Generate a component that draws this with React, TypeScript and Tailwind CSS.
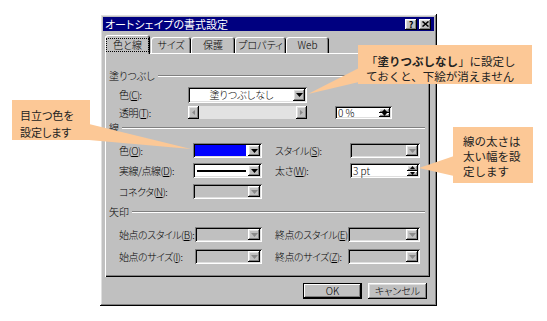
import type { ReactNode } from 'react';

const raised =
    'shadow-[inset_-1px_-1px_#000,inset_1px_1px_#fff,inset_-2px_-2px_#808080,inset_2px_2px_#dfdfdf]';
const sunken =
    'shadow-[inset_1px_1px_#808080,inset_-1px_-1px_#fff,inset_2px_2px_#000,inset_-2px_-2px_#dfdfdf]';

const Tri = ({ dir = 'down', dim = false, small = false }: { dir?: 'down' | 'up' | 'left' | 'right', dim?: boolean, small?: boolean }) => {
    const s = small ? 5 : 7;
    const h = small ? 3 : 4;
    const d = {
        down: `M0 0H${s}L${s / 2} ${h}Z`,
        up: `M${s / 2} 0L${s} ${h}H0Z`,
        left: `M${h} 0V${s}L0 ${s / 2}Z`,
        right: `M0 0V${s}L${h} ${s / 2}Z`,
    }[dir];
    const horiz = dir === 'left' || dir === 'right';
    return (
        <svg width={horiz ? h : s} height={horiz ? s : h} viewBox={`0 0 ${horiz ? h : s} ${horiz ? s : h}`}>
            <path d={d} fill={dim ? '#8a8a8a' : '#000'} />
        </svg>
    );
};

const Combo = ({ className, disabled = false, children }: { className: string, disabled?: boolean, children?: ReactNode }) => (
    <div className={`flex h-full p-[2px] ${sunken} ${disabled ? 'bg-[#c0c0c0]' : 'bg-white'} ${className}`}>
        <div className="flex-1 min-w-0 flex items-center">{children}</div>
        <div className={`w-[12px] h-full bg-[#c0c0c0] flex items-center justify-center ${raised}`}>
            <Tri dim={disabled} />
        </div>
    </div>
);

const Spin = ({ className, value }: { className: string, value: string }) => (
    <div className={`flex h-full p-[2px] bg-white ${sunken} ${className}`}>
        <div className="flex-1 flex items-center pl-[1px] leading-none">{value}</div>
        <div className="w-[11px] h-full flex flex-col">
            <div className={`flex-1 bg-[#c0c0c0] flex items-center justify-center ${raised}`}>
                <Tri dir="up" small />
            </div>
            <div className={`flex-1 bg-[#c0c0c0] flex items-center justify-center ${raised}`}>
                <Tri small />
            </div>
        </div>
    </div>
);

const Header = ({ label, className }: { label: string, className: string }) => (
    <div className={`flex items-center h-[14px] pl-[4px] pr-[5px] ${className}`}>
        <span className="leading-none">{label}</span>
        <div className="flex-1 ml-[3px] h-[2px] border-t border-[#808080] border-b border-b-white" />
    </div>
);

const Label = ({ text, k, className }: { text: string, k: string, className: string }) => (
    <span className={`shrink-0 leading-none whitespace-nowrap tracking-[-0.5px] ${className}`}>
        {text}(<u>{k}</u>):
    </span>
);

const Tab = ({ label, className, active = false }: { label: string, className: string, active?: boolean }) => (
    <div
        className={`flex items-center justify-center bg-[#c0c0c0] rounded-t-[3px] shadow-[inset_1px_1px_#fff,inset_-1px_0_#000,inset_-2px_0_#808080] ${active ? 'h-[19px] -mb-px relative z-10' : 'h-[16px]'} ${className}`}
    >
        {active ? (
            <span className="border border-dotted border-black px-[6px] py-[1px] leading-none">{label}</span>
        ) : (
            <span className="leading-none">{label}</span>
        )}
    </div>
);

const Button = ({ label, isDefault = false }: { label: string, isDefault?: boolean }) => (
    <div
        className={`w-[59px] h-[16px] flex items-center justify-center bg-[#c0c0c0] leading-none ${isDefault
            ? 'shadow-[inset_-1px_-1px_#000,inset_1px_1px_#000,inset_-2px_-2px_#000,inset_2px_2px_#fff,inset_-3px_-3px_#808080]'
            : raised}`}
    >
        {label}
    </div>
);

export default function App() {
    return (
        <div className="relative w-[547px] h-[321px] bg-white overflow-hidden pl-[100px] pt-[14px] font-['Noto_Sans_CJK_JP',sans-serif] text-black [font-feature-settings:'palt']">
            {/* dialog */}
            <div className={`w-[337px] h-[292px] bg-[#c0c0c0] p-[3px] text-[10px] font-light text-black ${raised}`}>
                <div className="h-[14px] bg-[#000080] flex items-center pl-[2px] pr-[3px]">
                    <span className="flex-1 text-white text-[11px] font-normal leading-none">オートシェイプの書式設定</span>
                    <div className={`w-[12px] h-[11px] bg-[#c0c0c0] flex items-center justify-center text-[9px] font-bold leading-none ${raised}`}>?</div>
                    <div className={`ml-[2px] w-[12px] h-[11px] bg-[#c0c0c0] flex items-center justify-center ${raised}`}>
                        <svg width="7" height="6" viewBox="0 0 7 6">
                            <path d="M0.5 0.5L6.5 5.5M6.5 0.5L0.5 5.5" stroke="#000" strokeWidth="1.5" />
                        </svg>
                    </div>
                </div>

                <div className="flex items-end h-[18px] mt-[4px] pl-[2px]">
                    <Tab label="色と線" className="w-[45px]" active />
                    <Tab label="サイズ" className="w-[40px] ml-px" />
                    <Tab label="保護" className="w-[44px]" />
                    <Tab label="プロパティ" className="w-[51px]" />
                    <Tab label="Web" className="w-[43px]" />
                </div>

                <div className="ml-[2px] w-[325px] h-[224px] flex flex-col shadow-[inset_1px_1px_#fff,inset_-1px_-1px_#000,inset_-2px_-2px_#808080]">
                    <Header label="塗りつぶし" className="mt-[16px]" />
                    <div className="flex items-center h-[16px] mt-[4px] pl-[14px]">
                        <Label text="色" k="C" className="w-[69px]" />
                        <Combo className="w-[119px]">
                            <span className="flex-1 text-center leading-none">塗りつぶしなし</span>
                        </Combo>
                    </div>
                    <div className="flex items-center h-[13px] mt-[3px] pl-[14px]">
                        <Label text="透明" k="T" className="w-[69px]" />
                        <div className="flex w-[119px] h-full bg-[#e2e2e2]">
                            <div className={`w-[11px] h-full bg-[#c0c0c0] flex items-center justify-center ${raised}`}>
                                <Tri dir="left" dim small />
                            </div>
                            <div className="flex-1" />
                            <div className={`w-[11px] h-full bg-[#c0c0c0] flex items-center justify-center ${raised}`}>
                                <Tri dir="right" dim small />
                            </div>
                        </div>
                        <Spin className="w-[57px] ml-[28px]" value="0 %" />
                    </div>

                    <Header label="線" className="mt-[2px]" />
                    <div className="flex items-center h-[15px] mt-[8px] pl-[14px]">
                        <Label text="色" k="O" className="w-[74px]" />
                        <Combo className="w-[69px]">
                            <div className="w-full h-full bg-[#0000ff] mr-[2px]" />
                        </Combo>
                        <Label text="スタイル" k="S" className="w-[75px] ml-[13px]" />
                        <Combo className="w-[70px]" disabled />
                    </div>
                    <div className="flex items-center h-[15px] mt-[5px] pl-[14px]">
                        <Label text="実線/点線" k="D" className="w-[74px]" />
                        <Combo className="w-[69px]">
                            <div className="w-full h-[2px] bg-black mx-[2px]" />
                        </Combo>
                        <Label text="太さ" k="W" className="w-[75px] ml-[13px]" />
                        <Spin className="w-[70px]" value="3 pt" />
                    </div>
                    <div className="flex items-center h-[15px] mt-[6px] pl-[14px]">
                        <Label text="コネクタ" k="N" className="w-[74px]" />
                        <Combo className="w-[69px]" disabled />
                    </div>

                    <Header label="矢印" className="mt-[6px]" />
                    <div className="flex items-center h-[15px] mt-[8px] pl-[14px]">
                        <Label text="始点のスタイル" k="B" className="w-[76px]" />
                        <Combo className="w-[67px]" disabled />
                        <Label text="終点のスタイル" k="E" className="w-[73px] ml-[13px]" />
                        <Combo className="w-[72px]" disabled />
                    </div>
                    <div className="flex items-center h-[15px] mt-[7px] pl-[14px]">
                        <Label text="始点のサイズ" k="I" className="w-[76px]" />
                        <Combo className="w-[67px]" disabled />
                        <Label text="終点のサイズ" k="Z" className="w-[73px] ml-[13px]" />
                        <Combo className="w-[72px]" disabled />
                    </div>
                </div>

                <div className="flex justify-end gap-[6px] mt-[6px] pr-[7px]">
                    <Button label="OK" isDefault />
                    <Button label="キャンセル" />
                </div>
            </div>

            {/* callout tails */}
            <svg className="absolute inset-0 pointer-events-none z-20" width="547" height="321">
                <polygon points="359,68 359,82 308,94" fill="#fcc896" />
                <polygon points="89,124 89,140 191,149" fill="#fcc896" />
                <polygon points="454,156 454,176 419,168" fill="#fcc896" />
            </svg>

            {/* callouts */}
            <div className="absolute left-[358px] top-[45px] w-[174px] h-[39px] bg-[#fcc896] z-30 pl-[8px] pt-[9px] text-[11.5px] leading-[15px] text-[#222] [font-feature-settings:normal]">
                <div className="whitespace-nowrap">「<b>塗りつぶしなし</b>」に設定し</div>
                <div className="whitespace-nowrap">ておくと、下絵が消えません</div>
            </div>
            <div className="absolute left-[12px] top-[100px] w-[78px] h-[40px] bg-[#fcc896] z-30 pl-[8px] pt-[7px] text-[11px] leading-[17px] text-[#222]">
                <div>目立つ色を</div>
                <div>設定します</div>
            </div>
            <div className="absolute left-[453px] top-[127px] w-[80px] h-[56px] bg-[#fcc896] z-30 pl-[10px] pt-[7px] text-[11.5px] leading-[15px] text-[#222] [font-feature-settings:normal]">
                <div>線の太さは</div>
                <div>太い幅を設</div>
                <div>定します</div>
            </div>
        </div>
    );
}
